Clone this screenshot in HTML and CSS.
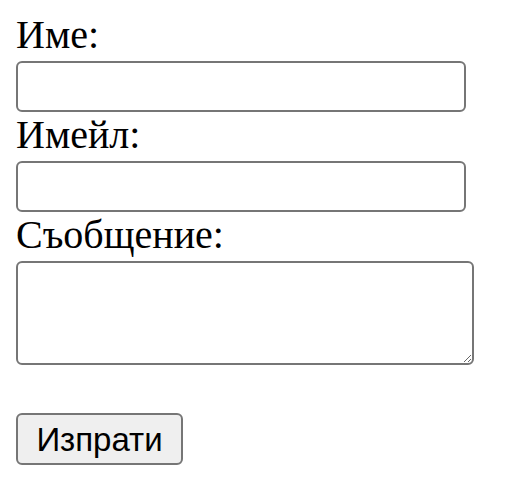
FILE: index.html
```html
<!DOCTYPE html>
<html lang="bg">
<head>
<meta charset="utf-8">
<title>Контакт</title>
<link rel="stylesheet" href="styles.css">
</head>
<body>
<form class="contact-form">
  <label class="field-label" for="name">Име:</label>
  <input class="field-input" type="text" id="name" name="name">
  <label class="field-label" for="email">Имейл:</label>
  <input class="field-input" type="email" id="email" name="email">
  <label class="field-label" for="message">Съобщение:</label>
  <textarea class="field-textarea" id="message" name="message"></textarea>
  <button class="submit-btn" type="submit">Изпрати</button>
</form>
</body>
</html>
```
FILE: styles.css
```css
html, body {
  background: #ffffff;
}
body {
  margin: 12px 16px 0;
  font-family: "Liberation Serif", "Times New Roman", serif;
  color: #000;
}
.contact-form {
  display: flex;
  flex-direction: column;
  align-items: flex-start;
}
.field-label {
  display: block;
  font-size: 40px;
  line-height: 46px;
  height: 49px;
}
.field-input {
  box-sizing: border-box;
  width: 450px;
  height: 51px;
  margin: 0;
  border: 2px solid #767676;
  border-radius: 6px;
  background: #fff;
  font-family: "Liberation Sans", Arial, sans-serif;
  font-size: 26px;
  padding: 2px 4px;
}
.field-textarea {
  box-sizing: border-box;
  width: 458px;
  height: 104px;
  margin: 0 0 48px;
  border: 2px solid #767676;
  border-radius: 6px;
  background: #fff;
  font-family: "Liberation Mono", monospace;
  font-size: 26px;
  padding: 4px;
}
.submit-btn {
  box-sizing: border-box;
  width: 167px;
  height: 52px;
  margin: 0;
  padding: 0;
  border: 2px solid #767676;
  border-radius: 6px;
  background: #efefef;
  color: #000;
  font-family: "Liberation Sans", Arial, sans-serif;
  font-size: 33px;
  line-height: 1;
}
```
